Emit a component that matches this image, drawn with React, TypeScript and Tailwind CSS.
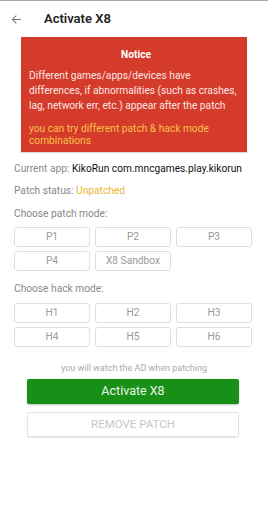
import React from 'react';

const patchModes = ['P1', 'P2', 'P3', 'P4', 'X8 Sandbox'];
const hackModes = ['H1', 'H2', 'H3', 'H4', 'H5', 'H6'];

const ModeButton: React.FC<{ label: string }> = ({ label }) => (
  <button className="h-[20px] rounded-[3px] border border-[#dedede] bg-white text-[10.2px] leading-none text-[#9a9a9a]">
    {label}
  </button>
);

const App: React.FC = () => {
  return (
    <div className="w-[268px] h-[513px] bg-white border-t border-[#a8a8a8] overflow-hidden" style={{ fontFamily: 'Roboto, "Noto Sans", sans-serif' }}>
      {/* Toolbar */}
      <div className="h-[35px] flex items-center">
        <svg className="ml-[11px] mt-[1px]" width="11" height="11" viewBox="0 0 24 24" fill="none" stroke="#777" strokeWidth="2.2" strokeLinecap="round">
          <path d="M21 12H4M11 4l-8 8 8 8" />
        </svg>
        <span className="ml-[22px] text-[13px] font-semibold text-[#222]">Activate X8</span>
      </div>

      {/* Notice */}
      <div className="mx-[21px] mt-[1px] h-[115px] bg-[#d53b2b] pl-[8px] pr-[4px] pt-[10px] shadow-[0_1px_1px_rgba(0,0,0,0.15)]">
        <div className="text-center text-[10.2px] font-bold text-white">Notice</div>
        <div className="mt-[6px] text-[10.2px] leading-[15px] text-[#fbe6e3]">
          Different games/apps/devices have differences, if abnormalities (such as crashes, lag, network err, etc.) appear after the patch
        </div>
        <div className="mt-[10px] text-[10.2px] leading-[12px] text-[#f8c14a]">
          you can try different patch &amp; hack mode combinations
        </div>
      </div>

      {/* Info */}
      <div className="px-[14px] text-[10.2px]">
        <div className="mt-[9px] text-[#888]">
          Current app: <span className="text-[#111]">KikoRun com.mncgames.play.kikorun</span>
        </div>
        <div className="mt-[7px] text-[#888]">
          Patch status: <span className="text-[#e8b630]">Unpatched</span>
        </div>
        <div className="mt-[7px] text-[#888]">Choose patch mode:</div>
        <div className="mt-[6px] w-[238px] grid grid-cols-3 gap-x-[5px] gap-y-[4px]">
          {patchModes.map(m => <ModeButton key={m} label={m} />)}
        </div>
        <div className="mt-[10px] text-[#888]">Choose hack mode:</div>
        <div className="mt-[7px] w-[238px] grid grid-cols-3 gap-x-[5px] gap-y-[4px]">
          {hackModes.map(m => <ModeButton key={m} label={m} />)}
        </div>
      </div>

      {/* Actions */}
      <div className="mt-[15px] text-center text-[9px] text-[#aaa]">you will watch the AD when patching</div>
      <div className="mx-[27px] mt-[3px] w-[212px] flex flex-col gap-[8px]">
        <button className="h-[25px] rounded-[2px] bg-[#188f16] text-[12.5px] text-[#e6f7e4] shadow-[0_1px_2px_rgba(0,0,0,0.25)]">
          Activate X8
        </button>
        <button className="h-[25px] rounded-[2px] border border-[#e2e2e2] bg-white text-[11.5px] uppercase text-[#c8c8c8] shadow-[0_1px_1px_rgba(0,0,0,0.08)]">
          Remove patch
        </button>
      </div>
    </div>
  );
};

export default App;
